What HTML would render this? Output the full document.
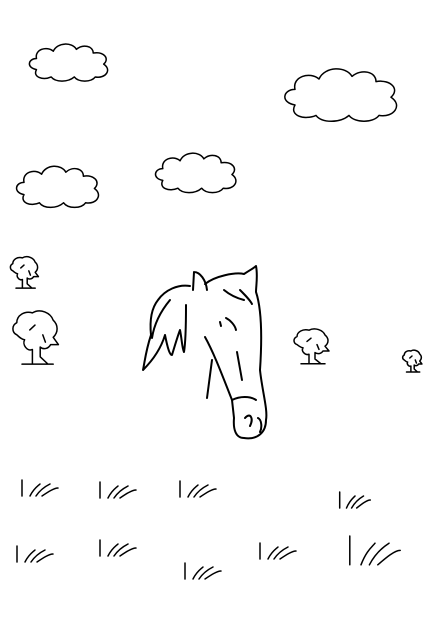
<!DOCTYPE html>
<html><head><style>html,body{margin:0;padding:0;background:#fff;width:431px;height:640px;overflow:hidden}
use,path{vector-effect:non-scaling-stroke}</style></head><body>
<svg width="431" height="640" viewBox="0 0 431 640" xmlns="http://www.w3.org/2000/svg" fill="none" stroke="#000" stroke-width="1.5" stroke-linecap="round" stroke-linejoin="round">
<defs>
<path id="cloud" vector-effect="non-scaling-stroke" d="M10,30 C0,28 2,18 10,18 C8,8 20,4 26,10 C30,0 44,0 48,8 C54,2 64,4 64,12 C74,10 80,18 74,24 C82,30 76,40 66,38 C62,44 50,44 46,38 C40,44 28,44 24,38 C16,42 6,38 10,30 Z"/>
<g id="tree"><path vector-effect="non-scaling-stroke" d="M6,22 C2,20 2,14 6,12 C6,6 12,2 18,4 C24,0 32,4 34,10 C38,14 38,20 34,24 L38,30 L32,30 C30,34 26,34 24,32 L24,40 L30,46 M18,46 L18,34 C14,36 10,30 12,26 C10,26 8,24 6,22 M10,46 L34,46 M16,18 L20,14 M26,22 L28,28"/></g>
<g id="grass"><path vector-effect="non-scaling-stroke" d="M2,0 L2,16 M10,16 C14,8 18,6 20,4 M16,16 C20,10 26,6 30,4 M22,16 C28,12 34,8 38,8"/></g>
</defs>
<use href="#cloud" transform="translate(26,42) scale(1.05,0.92)"/>
<use href="#cloud" transform="translate(280,66) scale(1.5,1.3)"/>
<use href="#cloud" transform="translate(13,164) scale(1.1,1.02)"/>
<use href="#cloud" transform="translate(152,151) scale(1.08,0.98)"/>
<use href="#tree" transform="translate(8,255) scale(0.8,0.72)"/>
<use href="#tree" transform="translate(9,308) scale(1.3,1.22)"/>
<use href="#tree" transform="translate(291,327) scale(1.0,0.8)"/>
<use href="#tree" transform="translate(401,349) scale(0.55,0.5)"/>
<g stroke-width="2">
<path d="M194,272 L193,290 M194,272 C200,272 206,280 207,290"/>
<path d="M205,284 C215,276 235,272 244,274 C250,270 254,268 256,266 C258,276 256,286 256,292 C262,310 262,340 260,370 C262,390 268,410 266,420 C266,432 258,440 244,438 C236,438 233,430 234,418 L232,400"/>
<path d="M205,337 C215,355 224,380 232,400 C240,396 250,396 256,400"/>
<path d="M212,360 L207,398"/>
<path d="M237,352 L242,380"/>
<path d="M245,418 C250,412 254,418 250,426 M258,418 C262,420 262,428 260,432"/>
<path d="M226,318 C230,320 235,325 236,330 M220,322 L221,326"/>
<path d="M190,286 C178,284 165,290 158,300 C150,310 150,325 151,335 C146,350 145,360 143,370 C155,358 162,345 165,335 C168,350 170,355 172,355 C175,345 178,335 180,330 C182,340 182,348 184,352 C186,340 186,322 186,305 M152,338 C154,325 160,312 170,300 M224,290 C230,295 236,298 244,300 M240,290 C246,296 250,300 252,304"/>
</g>
<use href="#grass" transform="translate(20,480)"/>
<use href="#grass" transform="translate(98,482)"/>
<use href="#grass" transform="translate(178,481)"/>
<use href="#grass" transform="translate(338,492) scale(0.85,1)"/>
<use href="#grass" transform="translate(15,546)"/>
<use href="#grass" transform="translate(98,540)"/>
<use href="#grass" transform="translate(183,563)"/>
<use href="#grass" transform="translate(258,543)"/>
<use href="#grass" transform="translate(347,536) scale(1.4,1.8)"/>
</svg>
</body></html>
